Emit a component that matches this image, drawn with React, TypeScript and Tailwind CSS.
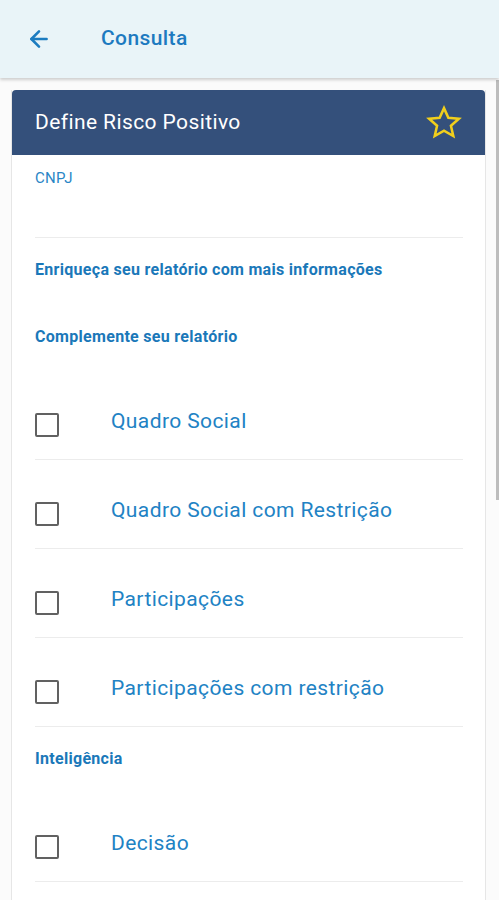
import { ArrowLeft } from 'lucide-react';

const complementos = [
  'Quadro Social',
  'Quadro Social com Restrição',
  'Participações',
  'Participações com restrição',
];

function StarOutline() {
  return (
    <svg width="38" height="38" viewBox="0 0 24 24" fill="none" stroke="#f1cf1c" strokeWidth="1.6" strokeLinejoin="miter">
      <path d="M12 2.6l2.75 6.1 6.65.62-5.02 4.42 1.48 6.52L12 16.9l-5.86 3.36 1.48-6.52L2.6 9.32l6.65-.62z" />
    </svg>
  );
}

function CheckRow({ label }: { label: string }) {
  return (
    <div className="flex items-start h-[89px] border-b border-[#ececec]">
      <div className="mt-[42px] w-6 h-6 shrink-0 rounded-[2px] border-2 border-[#616161]" />
      <span className="ml-[52px] mt-[38px] text-[21px] leading-[24px] tracking-[0.4px] text-[#2182c4]">{label}</span>
    </div>
  );
}

export default function App() {
  return (
    <div className="relative w-[499px] h-[900px] overflow-hidden bg-[#fbfbfb]" style={{ fontFamily: 'Roboto, "Noto Sans", Arial, sans-serif' }}>
      {/* Top bar */}
      <div className="relative z-10 h-[78px] bg-[#e9f4f8] flex items-center shadow-[0_2px_3px_rgba(0,0,0,0.18)]">
        <ArrowLeft className="ml-[26px] w-[26px] h-[26px] text-[#1c7cc0]" strokeWidth={2.4} />
        <span className="ml-[49px] text-[21px] font-medium tracking-[0.4px] text-[#1d7ac0]">Consulta</span>
      </div>

      {/* Scrollbar */}
      <div className="absolute right-0 top-[80px] w-[3px] h-[420px] bg-[#bdbdbd]" />

      {/* Card */}
      <div className="ml-[11px] mt-[12px] w-[475px] h-[900px] bg-white border-x border-[#e6e6e6]">
        <div className="h-[65px] bg-[#34507b] rounded-t-[4px] flex items-center justify-between pl-[23px] pr-[22px]">
          <span className="text-[21px] tracking-[0.4px] text-white">Define Risco Positivo</span>
          <StarOutline />
        </div>

        <div className="pl-[23px] pr-[22px]">
          <div className="pt-[15px] h-[83px] border-b border-[#ececec]">
            <span className="block text-[15px] leading-[16px] tracking-[0.3px] text-[#2a86c6]">CNPJ</span>
          </div>

          <div className="mt-[22px] text-[16px] leading-[20px] font-bold tracking-[0.3px] text-[#1a78b9]">
            Enriqueça seu relatório com mais informações
          </div>
          <div className="mt-[47px] text-[16px] leading-[20px] font-bold tracking-[0.3px] text-[#1a78b9]">
            Complemente seu relatório
          </div>

          <div className="mt-[24px]">
            {complementos.map((c) => (
              <CheckRow key={c} label={c} />
            ))}
          </div>

          <div className="mt-[22px] text-[16px] leading-[20px] font-bold tracking-[0.3px] text-[#1a78b9]">Inteligência</div>

          <div className="mt-[24px]">
            <CheckRow label="Decisão" />
          </div>
        </div>
      </div>
    </div>
  );
}
